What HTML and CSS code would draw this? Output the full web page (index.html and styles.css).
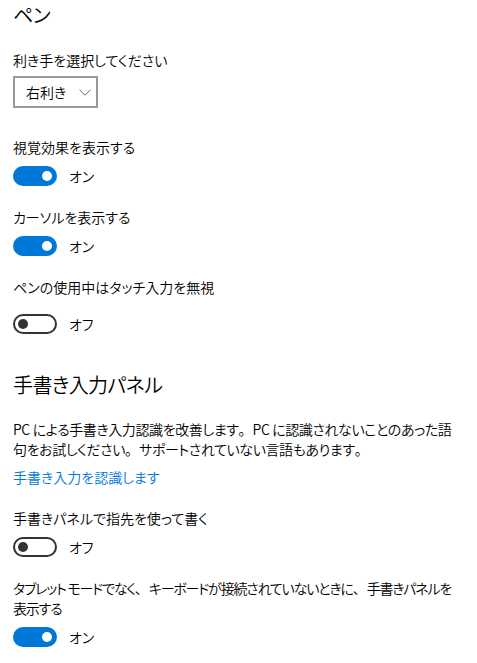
FILE: index.html
```html
<!DOCTYPE html>
<html lang="ja">
<head>
<meta charset="utf-8">
<link rel="stylesheet" href="styles.css">
</head>
<body>
<main class="page">
  <h2 class="title">ペン</h2>
  <div class="label first">利き手を選択してください</div>
  <div class="select"><span class="select-text">右利き</span><svg class="chev" width="12" height="7" viewBox="0 0 12 7"><path d="M0.5 0.8 L6 6.2 L11.5 0.8" fill="none" stroke="#666" stroke-width="1"/></svg></div>

  <div class="label gap-lg">視覚効果を表示する</div>
  <div class="toggle-row"><span class="toggle on"><span class="thumb"></span></span><span class="state">オン</span></div>

  <div class="label gap-md">カーソルを表示する</div>
  <div class="toggle-row"><span class="toggle on"><span class="thumb"></span></span><span class="state">オン</span></div>

  <div class="label gap-md">ペンの使用中はタッチ入力を無視</div>
  <div class="toggle-row low"><span class="toggle off"><span class="thumb"></span></span><span class="state">オフ</span></div>

  <h2 class="title section">手書き入力パネル</h2>
  <p class="desc"><span>PC による手書き入力認識を改善します</span><span class="fw">。</span><span>PC に認識されないことのあった語句をお試しください</span><span class="fw">。</span><span>サポートされていない言語もあります</span><span class="fw">。</span></p>
  <a class="link">手書き入力を認識します</a>

  <div class="label gap-md">手書きパネルで指先を使って書く</div>
  <div class="toggle-row"><span class="toggle off"><span class="thumb"></span></span><span class="state">オフ</span></div>

  <div class="label gap-md wide"><span>タブレット モードでなく</span><span class="fw">、</span><span>キーボードが接続されていないときに</span><span class="fw">、</span><span>手書きパネルを表示する</span></div>
  <div class="toggle-row"><span class="toggle on"><span class="thumb"></span></span><span class="state">オン</span></div>
</main>
</body>
</html>
```
FILE: styles.css
```css
* { box-sizing: border-box; }
html, body { margin: 0; padding: 0; background: #fff; }
body {
  font-family: "Noto Sans CJK JP", "Noto Sans", sans-serif;
  font-feature-settings: "palt";
  font-weight: 350;
  color: #000;
  font-size: 14px;
  line-height: 20px;
}
.fw { font-feature-settings: normal; letter-spacing: 0; }
.page {
  padding: 0 0 0 13px;
  width: 477px;
  display: flex;
  flex-direction: column;
  align-items: flex-start;
}
.title {
  margin: 0;
  font-size: 20px;
  font-weight: 350;
  letter-spacing: -0.6px;
  line-height: 29px;
}
.title.section { margin-top: 36px; }
.label { margin: 0; }
.label.wide { width: 446px; letter-spacing: -1.2px; }
.label.first { margin-top: 21px; }
.gap-lg { margin-top: 29px; }
.gap-md { margin-top: 21px; }
.select {
  margin-top: 6px;
  width: 85px;
  height: 32px;
  border: 2px solid #999;
  display: flex;
  align-items: center;
  padding-left: 11px;
  gap: 13px;
}
.chev { display: block; }
.toggle-row {
  margin-top: 9px;
  display: flex;
  align-items: center;
  gap: 12px;
  height: 20px;
}
.toggle-row.low { margin-top: 17px; }
.toggle {
  width: 44px;
  height: 20px;
  border-radius: 10px;
  display: flex;
  align-items: center;
  padding: 0 5px;
}
.toggle .thumb {
  width: 10px;
  height: 10px;
  border-radius: 50%;
}
.toggle.on { background: #0078d7; justify-content: flex-end; }
.toggle.on .thumb { background: #fff; }
.toggle.off { border: 2px solid #333; padding: 0 3px; }
.toggle.off .thumb { background: #333; }
.desc { margin: 20px 0 0; width: 450px; letter-spacing: -0.4px; }
.link { color: #0078d7; margin-top: 8px; }
```
